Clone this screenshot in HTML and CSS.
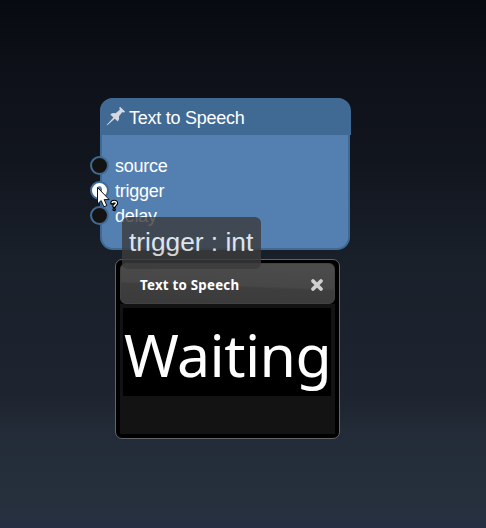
FILE: index.html
```html
<!DOCTYPE html>
<html lang="en">
<head>
<meta charset="utf-8">
<title>Text to Speech</title>
<link rel="stylesheet" href="styles.css">
</head>
<body>
<main class="canvas">
  <section class="node">
    <header class="node-title">
      <svg class="pin" width="20" height="20" viewBox="0 0 20 20"><path d="M0.6 19 L7.4 11.4 L4.3 8.5 Q6.5 6.6 9.6 7.2 L13.8 3.8 L13.2 1.6 L14.3 .9 L19 5.6 L18.4 6.6 L16.2 6.3 L13 10.2 Q13.8 13 11.8 15.6 L8.8 12.8 L1.2 19.2 Z"/></svg>
      <span>Text to Speech</span>
    </header>
    <ul class="ports">
      <li><i class="port"></i><span>source</span></li>
      <li><i class="port port-active"></i><span>trigger</span></li>
      <li><i class="port"></i><span>delay</span></li>
    </ul>
  </section>
  <section class="dialog">
    <header class="dialog-bar">
      <span>Text to Speech</span>
      <svg class="close" width="14" height="14" viewBox="0 0 14 14"><path d="M3 3 L11 11 M11 3 L3 11"/></svg>
    </header>
    <div class="dialog-body"><div class="status">Waiting</div></div>
  </section>
  <div class="tooltip">trigger : int</div>
  <svg class="cursor" width="24" height="28" viewBox="0 0 24 28">
    <path class="arrow" d="M1.5 1.5 V18 L5.2 14.6 L7.9 20.8 L10.8 19.5 L8.2 13.6 H13.2 Z"/>
    <path class="ask-edge" d="M16 17 Q16.3 15.5 18.2 15.5 Q20.5 15.6 20.3 17.4 Q20.1 18.4 18.2 19.8 V20.8 M18.2 23.3 V23.5"/>
    <path class="ask" d="M16 17 Q16.3 15.5 18.2 15.5 Q20.5 15.6 20.3 17.4 Q20.1 18.4 18.2 19.8 V20.8 M18.2 23.3 V23.5"/>
  </svg>
</main>
</body>
</html>
```
FILE: styles.css
```css
* { box-sizing: border-box; }
body { margin: 0; }
.canvas {
  position: relative;
  width: 486px;
  height: 528px;
  overflow: hidden;
  background: linear-gradient(#070b10 0, #0e1119 80px, #11151e 160px, #19202a 260px, #1d232f 390px, #222b37 430px, #26303d 505px, #262f42 528px);
  font-family: "Liberation Sans", sans-serif;
}
.node {
  position: absolute;
  left: 100px;
  top: 98px;
  width: 250px;
  height: 152px;
  background: #5480b1;
  border: 2px solid #406993;
  border-radius: 13px;
  color: #fff;
  font-size: 18px;
}
.node-title {
  display: flex;
  align-items: center;
  width: 251px;
  height: 37px;
  margin: -2px 0 0 -2px;
  padding: 4px 0 0 6px;
  background: #406993;
  border-radius: 13px 13px 0 0;
}
.pin { margin: -5px 3px 0 0; fill: #d5d8dc; }
.node-title span { letter-spacing: -.25px; }
.ports {
  margin: 18px 0 0 -12px;
  padding: 0;
  list-style: none;
}
.ports li { display: flex; align-items: center; height: 25px; line-height: 23px; }
.ports span { padding-top: 2px; letter-spacing: -.25px; }
.port {
  width: 19px;
  height: 19px;
  margin-right: 6px;
  border: 2px solid #406993;
  border-radius: 50%;
  background: #131313;
}
.port-active { background: radial-gradient(ellipse 3px 5px at center, #4e7caf 0 75%, #fff 100%); }
.dialog {
  position: absolute;
  left: 115px;
  top: 259px;
  width: 225px;
  height: 180px;
  padding: 3px 4px 4px;
  border: 1px solid #626466;
  border-radius: 7px;
  background: #000;
}
.dialog-bar {
  display: flex;
  align-items: center;
  justify-content: space-between;
  width: 215px;
  height: 41px;
  padding: 2px 10px 0 19px;
  border: 1px solid #424242;
  border-radius: 6px;
  background: linear-gradient(182deg, #4c4c4c, #474747 53%, #3e3e3e 58%, #3b3b3b);
  color: #fff;
  font: bold 13.3px/20px "Noto Sans", sans-serif;
}
.dialog-bar span { letter-spacing: .24px; }
.close { fill: none; stroke: #d0d0d0; stroke-width: 3.8; stroke-linecap: round; }
.dialog-body { height: 130px; padding: 4px 4px 0 3px; background: #131313; }
.status {
  height: 88px;
  padding-left: 1px;
  background: #000;
  color: #fff;
  font: 59px/92px "Noto Sans", sans-serif;
  letter-spacing: -.6px;
  white-space: nowrap;
}
.tooltip {
  position: absolute;
  left: 122px;
  top: 217px;
  width: 139px;
  height: 52px;
  padding-left: 7px;
  border-radius: 6px;
  background: #3c3c3c;
  opacity: .8;
  color: #fff;
  font-size: 26.3px;
  line-height: 50px;
  white-space: nowrap;
}
.cursor { position: absolute; left: 96px; top: 186px; }
.arrow { fill: #fff; stroke: #111; stroke-width: 1; }
.ask-edge { fill: none; stroke: #000; stroke-width: 3.6; stroke-linecap: round; }
.ask { fill: none; stroke: #fff; stroke-width: 1.5; }
```
